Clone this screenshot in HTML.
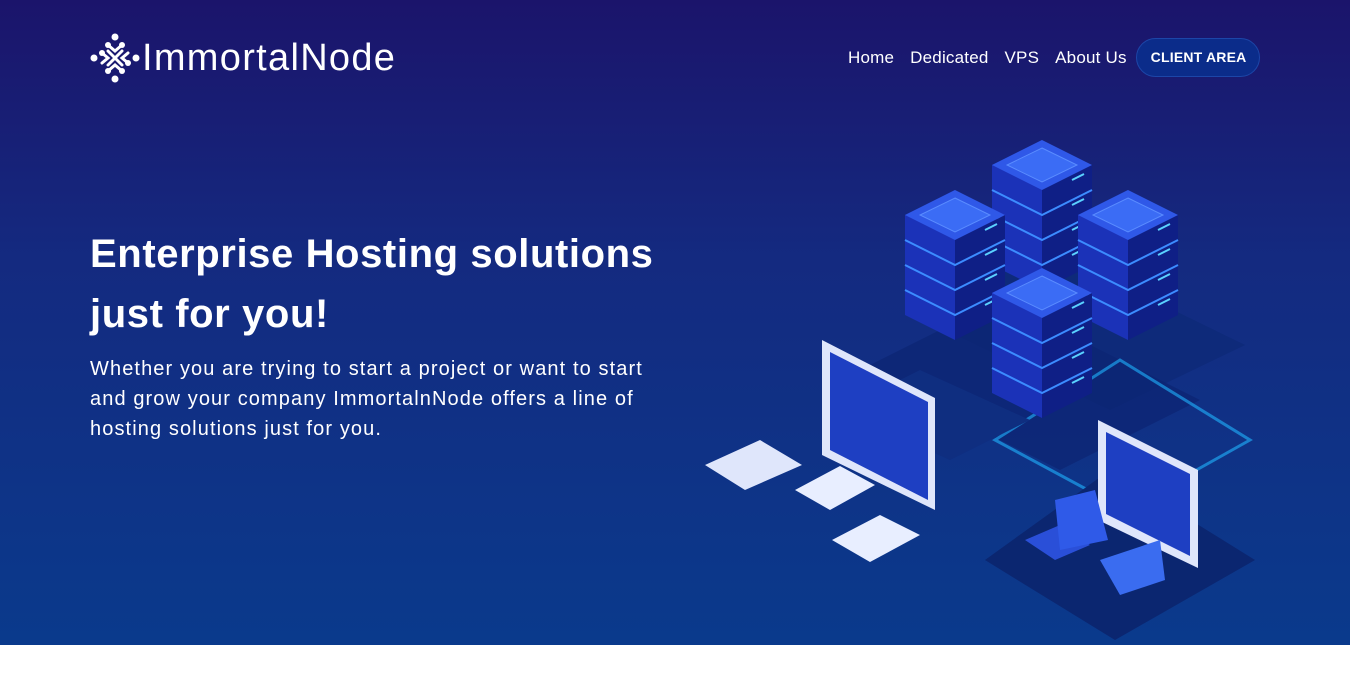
<!DOCTYPE html><html><head><style>
body{margin:0;width:1350px;height:696px;overflow:hidden;background:#fff;font-family:"Liberation Sans",sans-serif}
.hero{position:absolute;left:0;top:0;width:1350px;height:645px;background:linear-gradient(180deg,#1b146b 0%,#142a80 40%,#0a3a8c 100%)}
.logo{position:absolute;left:90px;top:33px;color:#fff;font-size:38px;letter-spacing:1.3px;font-weight:300}
.logo span{position:absolute;left:52px;top:0;line-height:50px;white-space:nowrap}
nav{position:absolute;top:38px;left:848px;display:flex;align-items:center;color:#fff;font-size:17px;letter-spacing:.2px;white-space:nowrap}
nav a{margin-right:16px}
.btn{margin-left:-7px;background:#0b2c8a;border:1px solid #1c46a8;border-radius:20px;padding:0 14px;height:37px;line-height:37px;font-weight:bold;font-size:14px;width:94px;text-align:center}
h1{position:absolute;left:90px;top:224px;margin:0;color:#fff;font-size:40px;line-height:60px;font-weight:bold;letter-spacing:.6px;white-space:nowrap}
p{position:absolute;left:90px;top:354px;margin:0;color:#fff;font-size:20px;line-height:30px;letter-spacing:1.1px;white-space:nowrap}
</style></head><body>
<div class="hero">
<div class="logo">
<svg width="50" height="50" viewBox="0 0 50 50" style="position:absolute;left:0;top:0" fill="#fff" stroke="#fff" stroke-width="3" stroke-linecap="round">
<circle cx="25" cy="4" r="3.5" stroke="none"/><circle cx="25" cy="46" r="3.5" stroke="none"/><circle cx="4" cy="25" r="3.5" stroke="none"/><circle cx="46" cy="25" r="3.5" stroke="none"/>
<path d="M18 12 L25 18 L32 12 M12 20 L18 25 L12 30 M38 20 L32 25 L38 30 M18 38 L25 32 L32 38 M18 18 L32 32 M32 18 L18 32" fill="none"/>
<circle cx="18" cy="12" r="3" stroke="none"/><circle cx="32" cy="12" r="3" stroke="none"/><circle cx="12" cy="20" r="3" stroke="none"/><circle cx="38" cy="30" r="3" stroke="none"/><circle cx="18" cy="38" r="3" stroke="none"/><circle cx="32" cy="38" r="3" stroke="none"/>
</svg><span>ImmortalNode</span></div>
<nav><a>Home</a><a>Dedicated</a><a>VPS</a><a>About Us</a><span class="btn">CLIENT AREA</span></nav>
<h1>Enterprise Hosting solutions<br>just for you!</h1>
<p>Whether you are trying to start a project or want to start<br>and grow your company ImmortalnNode offers a line of<br>hosting solutions just for you.</p>
<svg width="1350" height="645" style="position:absolute;left:0;top:0">
<defs>
<g id="srv">
<polygon points="0,0 -50,25 -50,125 0,150 0,50" fill="#1b32b8"/>
<polygon points="0,50 50,25 50,125 0,150" fill="#0f1f86"/>
<polygon points="0,0 50,25 0,50 -50,25" fill="#2f58e8"/>
<polygon points="0,8 35,25 0,42 -35,25" fill="#3b6cf5" stroke="#5a8cff"/>
<g stroke="#3c8cff" stroke-width="2" fill="none">
<path d="M-50 50 L0 75 L50 50 M-50 75 L0 100 L50 75 M-50 100 L0 125 L50 100"/></g>
<g stroke="#5ad1ff" stroke-width="2"><path d="M30 40 L42 34 M30 65 L42 59 M30 90 L42 84 M30 115 L42 109"/></g>
</g></defs>
<polygon points="1040,245 1245,345 1110,410 905,310" fill="#0e2a7a"/>
<polygon points="1000,300 1200,400 1060,470 860,370" fill="#0d2674" opacity=".8"/>
<polygon points="1120,360 1250,440 1125,510 995,440" fill="none" stroke="#1fb4ff" stroke-width="3" opacity=".6"/>
<polygon points="1110,470 1255,560 1115,640 985,560" fill="#0b2670"/>
<polygon points="920,370 1030,420 950,460 840,410" fill="#0f2e80"/>
<use href="#srv" x="1042" y="140"/>
<use href="#srv" x="955" y="190"/>
<use href="#srv" x="1128" y="190"/>
<use href="#srv" x="1042" y="268"/>
<polygon points="822,340 935,398 935,510 822,455" fill="#dfe6fb"/>
<polygon points="830,352 928,402 928,500 830,450" fill="#1e3fc2"/>
<polygon points="1098,420 1198,470 1198,568 1098,520" fill="#dfe6fb"/>
<polygon points="1106,432 1190,474 1190,556 1106,514" fill="#1e3fc2"/>
<polygon points="705,465 760,440 802,465 745,490" fill="#dfe6fb"/>
<polygon points="795,490 840,466 875,485 830,510" fill="#e8eeff"/>
<polygon points="832,540 880,515 920,535 870,562" fill="#e8eeff"/>
<polygon points="1025,540 1060,525 1090,545 1055,560" fill="#2a4fd8"/>
<polygon points="1100,560 1160,540 1165,580 1120,595" fill="#3a6cf0"/>
<polygon points="1055,500 1095,490 1108,540 1060,550" fill="#2f5ae8"/>
</svg>
</div>
</body></html>
